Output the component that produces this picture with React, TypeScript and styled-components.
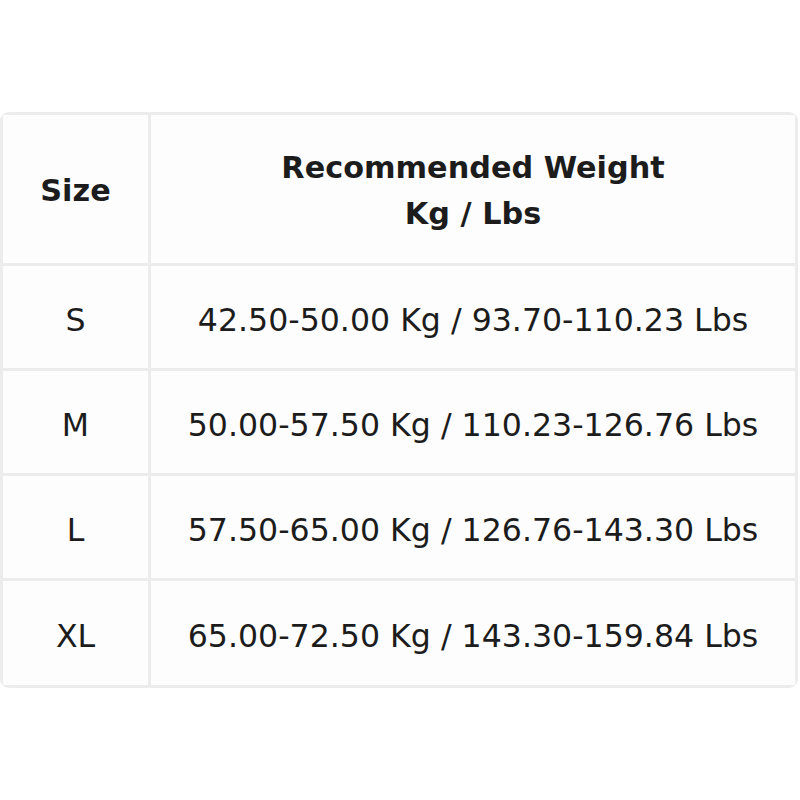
import { Fragment } from "react";
import styled, { createGlobalStyle } from "styled-components";

const GlobalStyle = createGlobalStyle`
  html, body {
    margin: 0;
    padding: 0;
    background: #ffffff;
  }
  body {
    font-family: "DejaVu Sans", "Liberation Sans", sans-serif;
    color: #1c1c1c;
  }
`;

const rows = [
  { size: "S", weight: "42.50-50.00 Kg / 93.70-110.23 Lbs" },
  { size: "M", weight: "50.00-57.50 Kg / 110.23-126.76 Lbs" },
  { size: "L", weight: "57.50-65.00 Kg / 126.76-143.30 Lbs" },
  { size: "XL", weight: "65.00-72.50 Kg / 143.30-159.84 Lbs" },
];

const Page = styled.div`
  width: 800px;
  height: 800px;
  padding-top: 112px;
  box-sizing: border-box;
`;

const Table = styled.div`
  width: 798px;
  display: grid;
  grid-template-columns: 145px 1fr;
  grid-template-rows: 148px repeat(3, 102px) 104px;
  gap: 3px;
  padding: 3px;
  box-sizing: border-box;
  background: #ececec;
  border-radius: 9px;
  overflow: hidden;
`;

const Cell = styled.div<{ $head?: boolean }>`
  background: #fdfdfd;
  display: flex;
  align-items: center;
  justify-content: center;
  text-align: center;
  font-size: ${({ $head }) => ($head ? "30.3px" : "31.6px")};
  font-weight: ${({ $head }) => ($head ? 700 : 400)};
  line-height: ${({ $head }) => ($head ? "46px" : "1.2")};
  padding-top: ${({ $head }) => ($head ? "4px" : "8px")};
  box-sizing: border-box;
`;

export default function App() {
  return (
    <Page>
      <GlobalStyle />
      <Table>
        <Cell $head>Size</Cell>
        <Cell $head>
          Recommended Weight
          <br />
          Kg / Lbs
        </Cell>
        {rows.map((r) => (
          <Fragment key={r.size}>
            <Cell>{r.size}</Cell>
            <Cell>{r.weight}</Cell>
          </Fragment>
        ))}
      </Table>
    </Page>
  );
}
